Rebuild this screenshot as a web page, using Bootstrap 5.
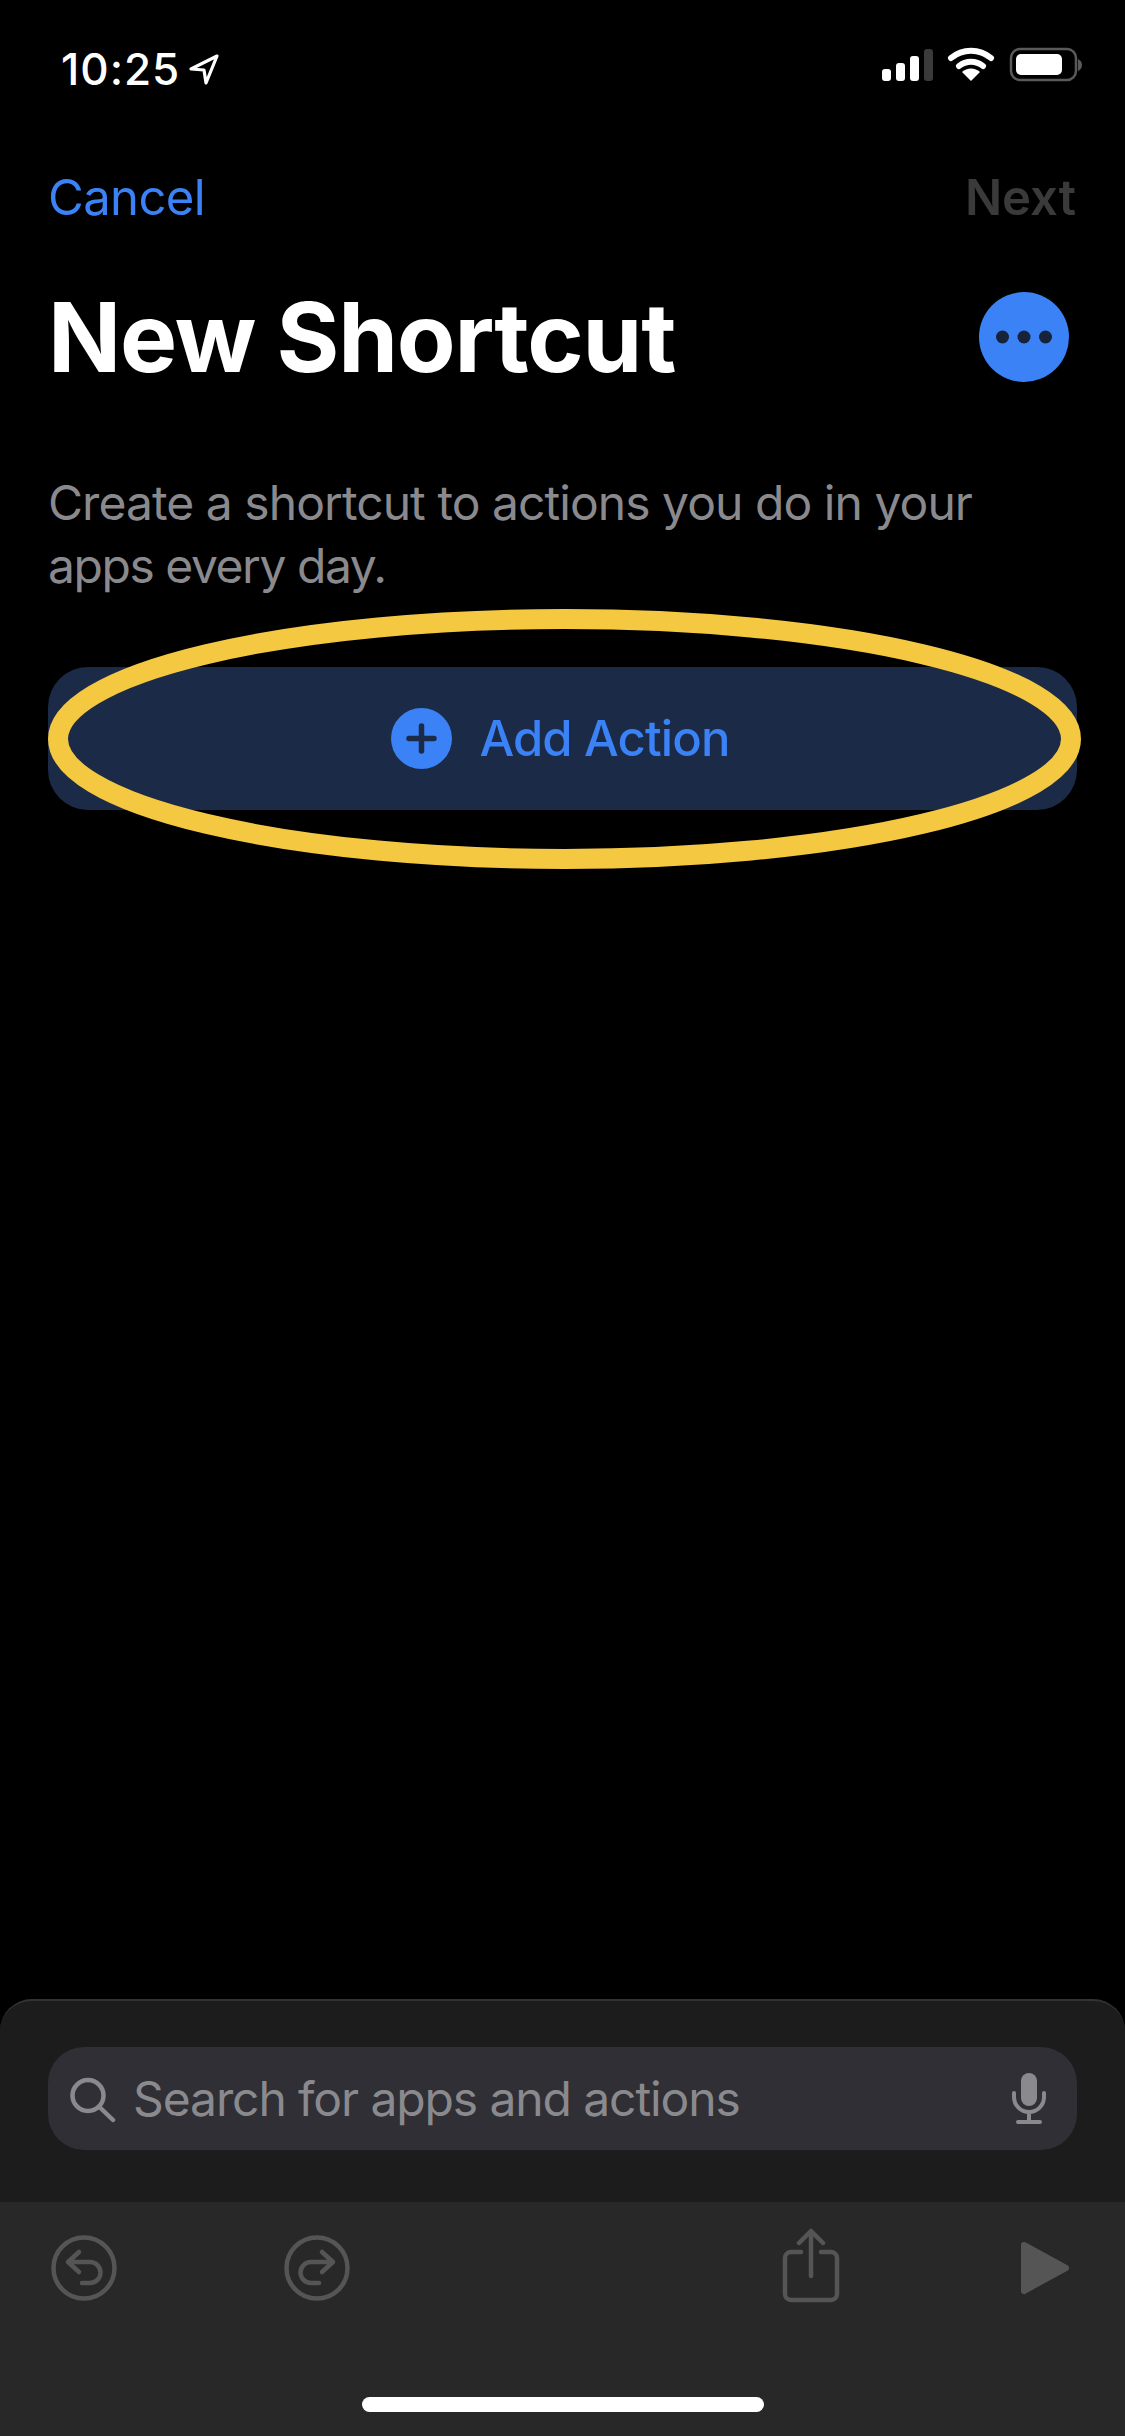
<!DOCTYPE html>
<html lang="en">
<head>
  <meta charset="UTF-8">
  <meta name="viewport" content="width=device-width, initial-scale=1.0">
  <title>New Shortcut</title>
  <link rel="stylesheet" href="https://cdn.jsdelivr.net/npm/bootstrap@5.3.3/dist/css/bootstrap.min.css">
  <style>
    body {
      background: #000;
      font-family: Inter, "Liberation Sans", sans-serif;
      width: 1125px;
      height: 2436px;
      overflow: hidden;
    }

    .screen { height: 2436px; }

    .status-row { height: 140px; flex-shrink: 0; padding: 44px 43px 0 61px; }
    .clock-group { gap: 7px; }
    .clock { color: #fff; font-size: 44px; font-weight: 500; line-height: 50px; letter-spacing: 1px; }

    .nav-row { padding: 29px 49px 0 48px; height: 88px; flex-shrink: 0; font-size: 49px; line-height: 58px; }
    .cancel-link { color: #3b82f6; text-decoration: none; letter-spacing: -0.6px; }
    .next-link { color: #3a3a3a; font-weight: 600; text-decoration: none; }

    .title-row { padding: 51px 56px 76px 48px; flex-shrink: 0; }
    .title-row h1 { color: #fff; font-size: 96px; font-weight: 700; line-height: 116px; margin: 0; letter-spacing: -1.2px; }
    .more-btn { width: 90px; height: 90px; background: #3b82f6; border-radius: 50%; border: 0; padding: 0; }

    .intro { color: #8a8a8e; font-size: 48px; line-height: 63px; margin: 0; padding: 0 48px; letter-spacing: -0.95px; flex-shrink: 0; }
    .intro-tail { letter-spacing: -1.45px; }

    .annotated { margin: 70px 48px 0; position: relative; flex-shrink: 0; }
    .add-btn { height: 143px; width: 100%; background: #1b2b47; border: 0; border-radius: 40px; color: #3b82f6; font-size: 49px; font-weight: 500; letter-spacing: -0.85px; gap: 27px; padding: 0 4px 0 0; }
    .plus-dot { width: 61px; height: 61px; }
    .ring { position: absolute; left: 0; top: -58px; width: 1033px; height: 260px; pointer-events: none; }

    .search-sheet { background: #1c1c1c; border-top: 2px solid #333; border-radius: 32px 32px 0 0; height: 203px; padding: 46px 48px 0; flex-shrink: 0; }
    .search-box { height: 103px; background: #2f2f35; border-radius: 36px; padding: 0 31px 0 21px; gap: 16px; }
    .search-text { color: #8a8a8e; font-size: 48px; line-height: 58px; letter-spacing: -1.1px; }

    .tool-sheet { background: #282828; height: 234px; flex-shrink: 0; }
    .tool-row { height: 195px; padding-left: 50px; }
    .undo-icon { margin-top: 32px; }
    .redo-icon { margin: 32px 0 0 165px; }
    .share-icon { margin: 26px 0 0 430px; }
    .play-icon { margin: 37px 0 0 178px; }
    .home-bar { margin-left: 362px; width: 402px; height: 15px; background: #fff; border-radius: 8px; }
  </style>
</head>
<body>
  <div class="screen d-flex flex-column">
    <div class="status-row d-flex justify-content-between align-items-start">
      <div class="clock-group d-flex align-items-center">
        <span class="clock">10:25</span>
        <svg width="34" height="36" viewBox="0 0 34 36" fill="none"><path d="M30 5 L4 18 L17 19 L19 32 Z" stroke="#fff" stroke-width="3.2" stroke-linejoin="round"/></svg>
      </div>
      <svg width="205" height="40" viewBox="877 48 205 40">
        <rect x="882" y="73" width="9" height="12" rx="3" fill="#fff"/>
        <rect x="896" y="67" width="9" height="18" rx="3" fill="#fff"/>
        <rect x="910" y="60" width="9" height="25" rx="3" fill="#fff"/>
        <rect x="924" y="53" width="9" height="32" rx="3" fill="#3a3a3a"/>
        <path d="M951 62 A31 31 0 0 1 991 62" fill="none" stroke="#fff" stroke-width="6" stroke-linecap="round"/>
        <path d="M959 70 A19 19 0 0 1 983 70" fill="none" stroke="#fff" stroke-width="6" stroke-linecap="round"/>
        <path d="M971 85 L962 76 A13 13 0 0 1 980 76 Z" fill="#fff"/>
        <rect x="1011" y="53" width="65" height="31" rx="9" fill="none" stroke="#5a5a5a" stroke-width="2.5"/>
        <rect x="1016" y="58" width="46" height="21" rx="5" fill="#fff"/>
        <path d="M1078 63 q4 2 4 6 q0 4 -4 6 Z" fill="#5a5a5a"/>
      </svg>
    </div>

    <div class="nav-row d-flex justify-content-between">
      <a class="cancel-link" href="#">Cancel</a>
      <a class="next-link" href="#">Next</a>
    </div>

    <div class="title-row d-flex justify-content-between align-items-center">
      <h1>New Shortcut</h1>
      <button class="more-btn d-flex align-items-center justify-content-center" type="button" aria-label="More">
        <svg width="56" height="14" viewBox="0 0 56 14" fill="#16233b"><circle cx="6.5" cy="7" r="6.5"/><circle cx="28" cy="7" r="6.5"/><circle cx="49.5" cy="7" r="6.5"/></svg>
      </button>
    </div>

    <p class="intro">Create a shortcut to actions you do in your<br><span class="intro-tail">apps every day.</span></p>

    <div class="annotated">
      <button class="add-btn d-flex align-items-center justify-content-center" type="button">
        <svg class="plus-dot" viewBox="0 0 61 61"><circle cx="30.5" cy="30.5" r="30.5" fill="#3b82f6"/><path d="M30.5 18 V43 M18 30.5 H43" stroke="#1b2b47" stroke-width="5.5" stroke-linecap="round"/></svg>
        <span>Add Action</span>
      </button>
      <svg class="ring" viewBox="0 0 1033 260"><ellipse cx="516.5" cy="130" rx="506.5" ry="120" fill="none" stroke="#f5c842" stroke-width="20"/></svg>
    </div>

    <div class="flex-grow-1"></div>

    <div class="search-sheet">
      <div class="search-box d-flex align-items-center">
        <svg width="48" height="48" viewBox="0 0 48 48" fill="none" stroke="#8a8a8e" stroke-width="4.5" stroke-linecap="round"><circle cx="19" cy="20.5" r="15.5"/><path d="M31 32.5 L44 45"/></svg>
        <span class="search-text flex-grow-1">Search for apps and actions</span>
        <svg width="34" height="52" viewBox="0 0 34 52" fill="none"><rect x="9" y="0" width="16" height="33" rx="8" fill="#8a8a8e"/><path d="M2 20 V24 A15 15 0 0 0 32 24 V20 M17 40 V48 M6 49 H28" stroke="#8a8a8e" stroke-width="4" stroke-linecap="round"/></svg>
      </div>
    </div>

    <div class="tool-sheet">
      <div class="tool-row d-flex align-items-start">
        <svg class="undo-icon" width="68" height="68" viewBox="0 0 68 68" fill="none" stroke="#555" stroke-width="4.5" stroke-linecap="round" stroke-linejoin="round"><circle cx="34" cy="34" r="30.5"/><path d="M29 18 L18 28 L29 38 M18 28 H40 A10.5 10.5 0 0 1 40 49 H32"/></svg>
        <svg class="redo-icon" width="68" height="68" viewBox="0 0 68 68" fill="none" stroke="#555" stroke-width="4.5" stroke-linecap="round" stroke-linejoin="round"><circle cx="34" cy="34" r="30.5"/><path d="M39 18 L50 28 L39 38 M50 28 H28 A10.5 10.5 0 0 0 28 49 H36"/></svg>
        <svg class="share-icon" width="60" height="76" viewBox="0 0 60 76" fill="none" stroke="#555" stroke-width="4.5" stroke-linecap="round" stroke-linejoin="round"><path d="M30 4 V48 M18 15 L30 3 L42 15 M20 24 H10 A6 6 0 0 0 4 30 V66 A6 6 0 0 0 10 72 H50 A6 6 0 0 0 56 66 V30 A6 6 0 0 0 50 24 H40"/></svg>
        <svg class="play-icon" width="52" height="58" viewBox="0 0 52 58"><path d="M5 6 L47 29 L5 52 Z" fill="#555" stroke="#555" stroke-width="6" stroke-linejoin="round"/></svg>
      </div>
      <div class="home-bar"></div>
    </div>
  </div>
  <script src="https://cdn.jsdelivr.net/npm/bootstrap@5.3.3/dist/js/bootstrap.bundle.min.js"></script>
</body>
</html>
